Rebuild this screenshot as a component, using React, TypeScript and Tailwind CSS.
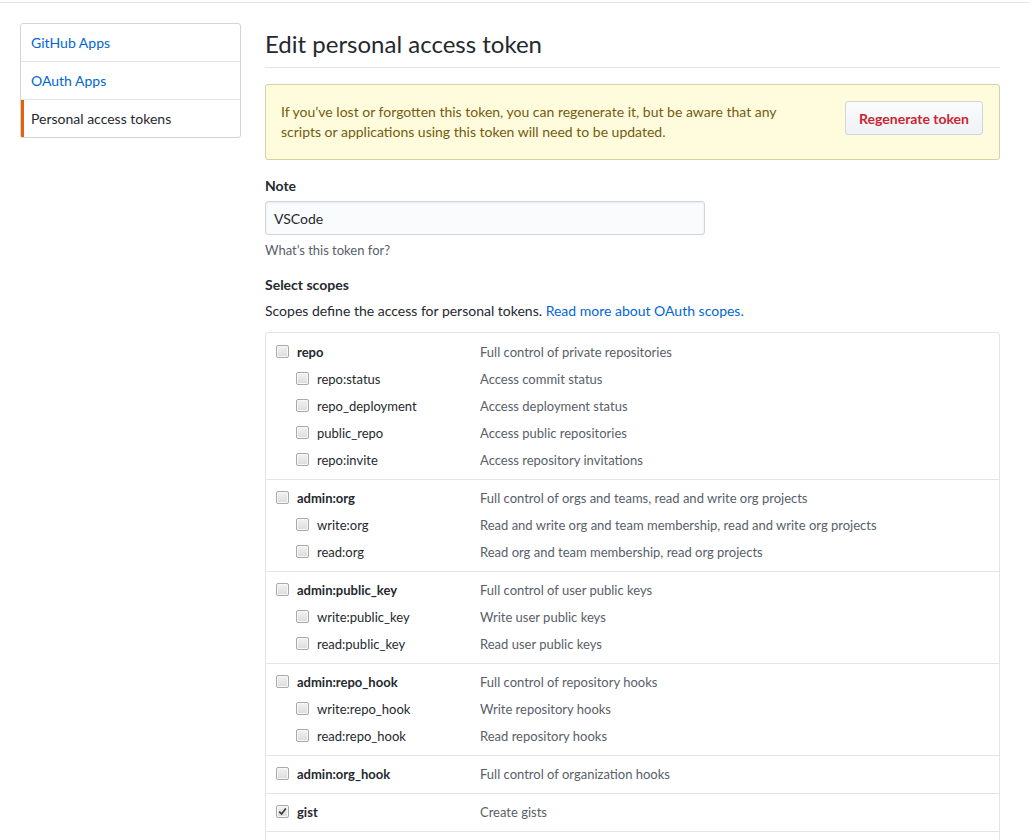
type Scope = { name: string; desc: string; checked?: boolean }
type Group = { parent: Scope; children: Scope[] }

const groups: Group[] = [
  {
    parent: { name: 'repo', desc: 'Full control of private repositories' },
    children: [
      { name: 'repo:status', desc: 'Access commit status' },
      { name: 'repo_deployment', desc: 'Access deployment status' },
      { name: 'public_repo', desc: 'Access public repositories' },
      { name: 'repo:invite', desc: 'Access repository invitations' },
    ],
  },
  {
    parent: { name: 'admin:org', desc: 'Full control of orgs and teams, read and write org projects' },
    children: [
      { name: 'write:org', desc: 'Read and write org and team membership, read and write org projects' },
      { name: 'read:org', desc: 'Read org and team membership, read org projects' },
    ],
  },
  {
    parent: { name: 'admin:public_key', desc: 'Full control of user public keys' },
    children: [
      { name: 'write:public_key', desc: 'Write user public keys' },
      { name: 'read:public_key', desc: 'Read user public keys' },
    ],
  },
  {
    parent: { name: 'admin:repo_hook', desc: 'Full control of repository hooks' },
    children: [
      { name: 'write:repo_hook', desc: 'Write repository hooks' },
      { name: 'read:repo_hook', desc: 'Read repository hooks' },
    ],
  },
  { parent: { name: 'admin:org_hook', desc: 'Full control of organization hooks' }, children: [] },
  { parent: { name: 'gist', desc: 'Create gists', checked: true }, children: [] },
  { parent: { name: 'notifications', desc: 'Access notifications' }, children: [] },
]

const sideItems = ['GitHub Apps', 'OAuth Apps', 'Personal access tokens']

function Box({ checked }: { checked?: boolean }) {
  return (
    <span className="relative mt-[-3px] inline-flex h-[13px] w-[13px] shrink-0 items-center justify-center rounded-[2px] border border-[#a9a9a9] bg-gradient-to-b from-[#f2f2f2] to-[#dcdcdc] shadow-[inset_0_0_0_1px_#f7f7f7]">
      {checked && (
        <svg width="9" height="9" viewBox="0 0 9 9">
          <path d="M1.2 4.6 L3.6 7 L7.8 1.6" fill="none" stroke="#3a3a3a" strokeWidth="1.7" />
        </svg>
      )}
    </span>
  )
}

function Row({ s, child }: { s: Scope; child?: boolean }) {
  return (
    <div className="flex h-[27px] items-center">
      <div className={`flex w-[214px] shrink-0 items-center gap-[8px] ${child ? 'pl-[30px]' : 'pl-[10px]'}`}>
        <Box checked={s.checked} />
        <span className={child ? 'text-[#24292e]' : 'font-bold text-[#24292e]'}>{s.name}</span>
      </div>
      <span className="text-[#586069]">{s.desc}</span>
    </div>
  )
}

export default function App() {
  return (
    <div className="min-h-screen bg-white pt-[2px] font-['Lato',sans-serif] text-[14px] text-[#24292e]">
      <div className="flex border-t border-[#e1e4e8] px-[20px] pt-[20px]">
        <nav className="w-[221px] shrink-0 self-start rounded-[3px] border border-[#d1d5da]">
          {sideItems.map((item, i) => {
            const active = i === sideItems.length - 1
            return (
              <div
                key={item}
                className={
                  active
                    ? 'flex h-[37px] items-center border-l-[3px] border-[#e36209] pl-[7px] text-[#24292e]'
                    : 'flex h-[38px] items-center border-b border-[#e1e4e8] pl-[10px] text-[#0366d6]'
                }
              >
                {item}
              </div>
            )
          })}
        </nav>

        <main className="ml-[24px] w-[735px]">
          <div className="mt-[6px] border-b border-[#e1e4e8] pb-[8px]">
            <h2 className="text-[24px] leading-[30px] font-normal text-[#24292e]">Edit personal access token</h2>
          </div>

          <div className="mt-[16px] flex items-start justify-between rounded-[3px] border border-[#d9d0a5] bg-[#fffbdd] py-[17px] pr-[16px] pl-[15px] text-[#735c0f]">
            <p className="leading-[20px]">
              If you’ve lost or forgotten this token, you can regenerate it, but be aware that any
              <br />
              scripts or applications using this token will need to be updated.
            </p>
            <button className="mt-[-1px] h-[34px] rounded-[3px] border border-[#d1d5da] bg-gradient-to-b from-[#fafbfc] to-[#eff3f6] px-[13px] font-bold text-[#cb2431]">
              Regenerate token
            </button>
          </div>

          <div className="mt-[15px] h-[21px] leading-[21px] font-bold">Note</div>
          <div className="mt-[5px] flex h-[34px] w-[440px] items-center rounded-[3px] border border-[#d1d5da] bg-[#fafbfc] px-[8px] shadow-[inset_0_1px_2px_rgba(27,31,35,0.075)]">
            VSCode
          </div>
          <div className="mt-[5px] h-[20px] text-[13px] leading-[20px] text-[#586069]">What’s this token for?</div>

          <div className="mt-[14px] h-[21px] leading-[21px] font-bold">Select scopes</div>
          <p className="mt-[6px] leading-[20px]">
            Scopes define the access for personal tokens.{' '}
            <span className="text-[#0366d6]">Read more about OAuth scopes.</span>
          </p>

          <div className="mt-[11px] rounded-[3px] border border-[#e1e4e8] pt-[1px] text-[13px]">
            {groups.map((g) => (
              <div key={g.parent.name} className="border-b border-[#e1e4e8] py-[5px] last:border-b-0">
                <Row s={g.parent} />
                {g.children.map((c) => (
                  <Row key={c.name} s={c} child />
                ))}
              </div>
            ))}
          </div>
        </main>
      </div>
    </div>
  )
}
